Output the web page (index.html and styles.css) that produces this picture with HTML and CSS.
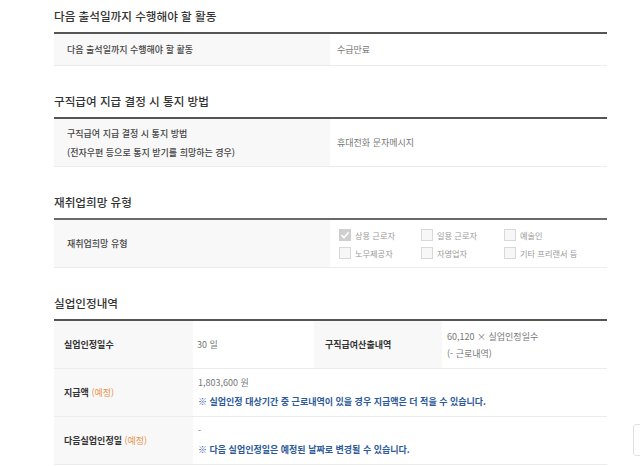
FILE: index.html
```html
<!DOCTYPE html>
<html lang="ko">
<head>
<meta charset="utf-8">
<link rel="stylesheet" href="styles.css">
</head>
<body>
<div class="page">
  <section class="sec first">
    <h2 class="sec-title">다음 출석일까지 수행해야 할 활동</h2>
    <div class="tbl">
      <div class="row two short">
        <div class="th">다음 출석일까지 수행해야 할 활동</div>
        <div class="td">수급만료</div>
      </div>
    </div>
  </section>

  <section class="sec">
    <h2 class="sec-title">구직급여 지급 결정 시 통지 방법</h2>
    <div class="tbl">
      <div class="row two">
        <div class="th multi">구직급여 지급 결정 시 통지 방법<br>(전자우편 등으로 통지 받기를 희망하는 경우)</div>
        <div class="td">휴대전화 문자메시지</div>
      </div>
    </div>
  </section>

  <section class="sec">
    <h2 class="sec-title">재취업희망 유형</h2>
    <div class="tbl grey">
      <div class="row two">
        <div class="th">재취업희망 유형</div>
        <div class="td">
          <div class="checks">
            <label class="chk"><span class="box on"><svg viewBox="0 0 12 12" width="12" height="12"><path d="M2.5 6.2 L5 8.6 L9.6 3.4" fill="none" stroke="#fff" stroke-width="1.6"/></svg></span>상용 근로자</label>
            <label class="chk"><span class="box"></span>일용 근로자</label>
            <label class="chk"><span class="box"></span>예술인</label>
            <label class="chk"><span class="box"></span>노무제공자</label>
            <label class="chk"><span class="box"></span>자영업자</label>
            <label class="chk"><span class="box"></span>기타 프리랜서 등</label>
          </div>
        </div>
      </div>
    </div>
  </section>

  <section class="sec">
    <h2 class="sec-title">실업인정내역</h2>
    <div class="tbl">
      <div class="row four">
        <div class="th b">실업인정일수</div>
        <div class="td">30 일</div>
        <div class="th b th2">구직급여산출내역</div>
        <div class="td multi2">60,120 × 실업인정일수<br>(- 근로내역)</div>
      </div>
      <div class="row wide">
        <div class="th b"><span>지급액 <span class="est">(예정)</span></span></div>
        <div class="td stack">
          <span>1,803,600 원</span>
          <span class="note">※ 실업인정 대상기간 중 근로내역이 있을 경우 지급액은 더 적을 수 있습니다.</span>
        </div>
      </div>
      <div class="row wide">
        <div class="th b"><span>다음실업인정일 <span class="est">(예정)</span></span></div>
        <div class="td stack">
          <span>-</span>
          <span class="note">※ 다음 실업인정일은 예정된 날짜로 변경될 수 있습니다.</span>
        </div>
      </div>
    </div>
  </section>
</div>
<div class="side-tab"></div>
</body>
</html>
```

FILE: styles.css
```css
* { box-sizing: border-box; }
html, body { margin: 0; padding: 0; background: #fff; }
body {
  font-family: "Noto Sans CJK KR", "Noto Sans", sans-serif;
  color: #333;
  overflow: hidden;
  height: 466px;
}
.page {
  width: 553px;
  margin-left: 54px;
}
.sec { margin-top: 26px; }
.sec.first { margin-top: 7px; }
.sec-title {
  margin: 0 0 6px 0;
  font-size: 11.6px;
  line-height: 19px;
  font-weight: 500;
  color: #333;
}
.tbl {
  border-top: 2px solid #555;
}
.tbl.grey { border-top: 2px solid #6a6a6a; }
.row {
  display: grid;
  border-bottom: 1px solid #ececec;
  height: 48px;
  font-size: 9px;
}
.row.short { height: 32px; }
.row.two { grid-template-columns: 276px 1fr; }
.row.four { grid-template-columns: 139px 121px 128px 1fr; }
.row.wide { grid-template-columns: 139px 1fr; }
.th {
  background: #f8f8f8;
  padding-left: 13px;
  display: flex;
  align-items: center;
  color: #444;
  font-weight: 500;
}
.th.multi {
  display: block;
  padding-top: 5px;
  line-height: 19px;
}
.th.b { font-weight: 700; padding-left: 10px; color: #333; }
.th.th2 { padding-left: 11px; }
.td {
  padding-left: 7px;
  display: flex;
  align-items: center;
  color: #777;
}
.four .td { padding-left: 4px; }
.td.multi2 {
  display: block;
  padding-top: 7px;
  line-height: 17px;
  padding-left: 5px;
}
.td.stack {
  flex-direction: column;
  align-items: flex-start;
  justify-content: flex-start;
  padding-top: 4px;
  padding-left: 5px;
  line-height: 19px;
}
.note { color: #2d5a99; font-weight: 700; }
.est { color: #e8934a; font-weight: 400; }
.checks {
  display: grid;
  grid-template-columns: 82px 83px 1fr;
  row-gap: 6px;
  padding-left: 2px;
}
.chk {
  display: flex;
  align-items: center;
  font-size: 8.2px;
  color: #999;
  line-height: 12px;
}
.box {
  width: 12px;
  height: 12px;
  border: 1px solid #d8d8d8;
  background: #f7f7f7;
  margin-right: 4px;
  display: inline-flex;
}
.box.on { background: #cfcfcf; border-color: #cfcfcf; }
.box svg { display: block; margin: -1px; }
.side-tab {
  position: fixed;
  left: 633px;
  top: 424px;
  width: 20px;
  height: 32px;
  border: 1px solid #e2e2e2;
  border-radius: 3px;
  background: #fff;
}
```
